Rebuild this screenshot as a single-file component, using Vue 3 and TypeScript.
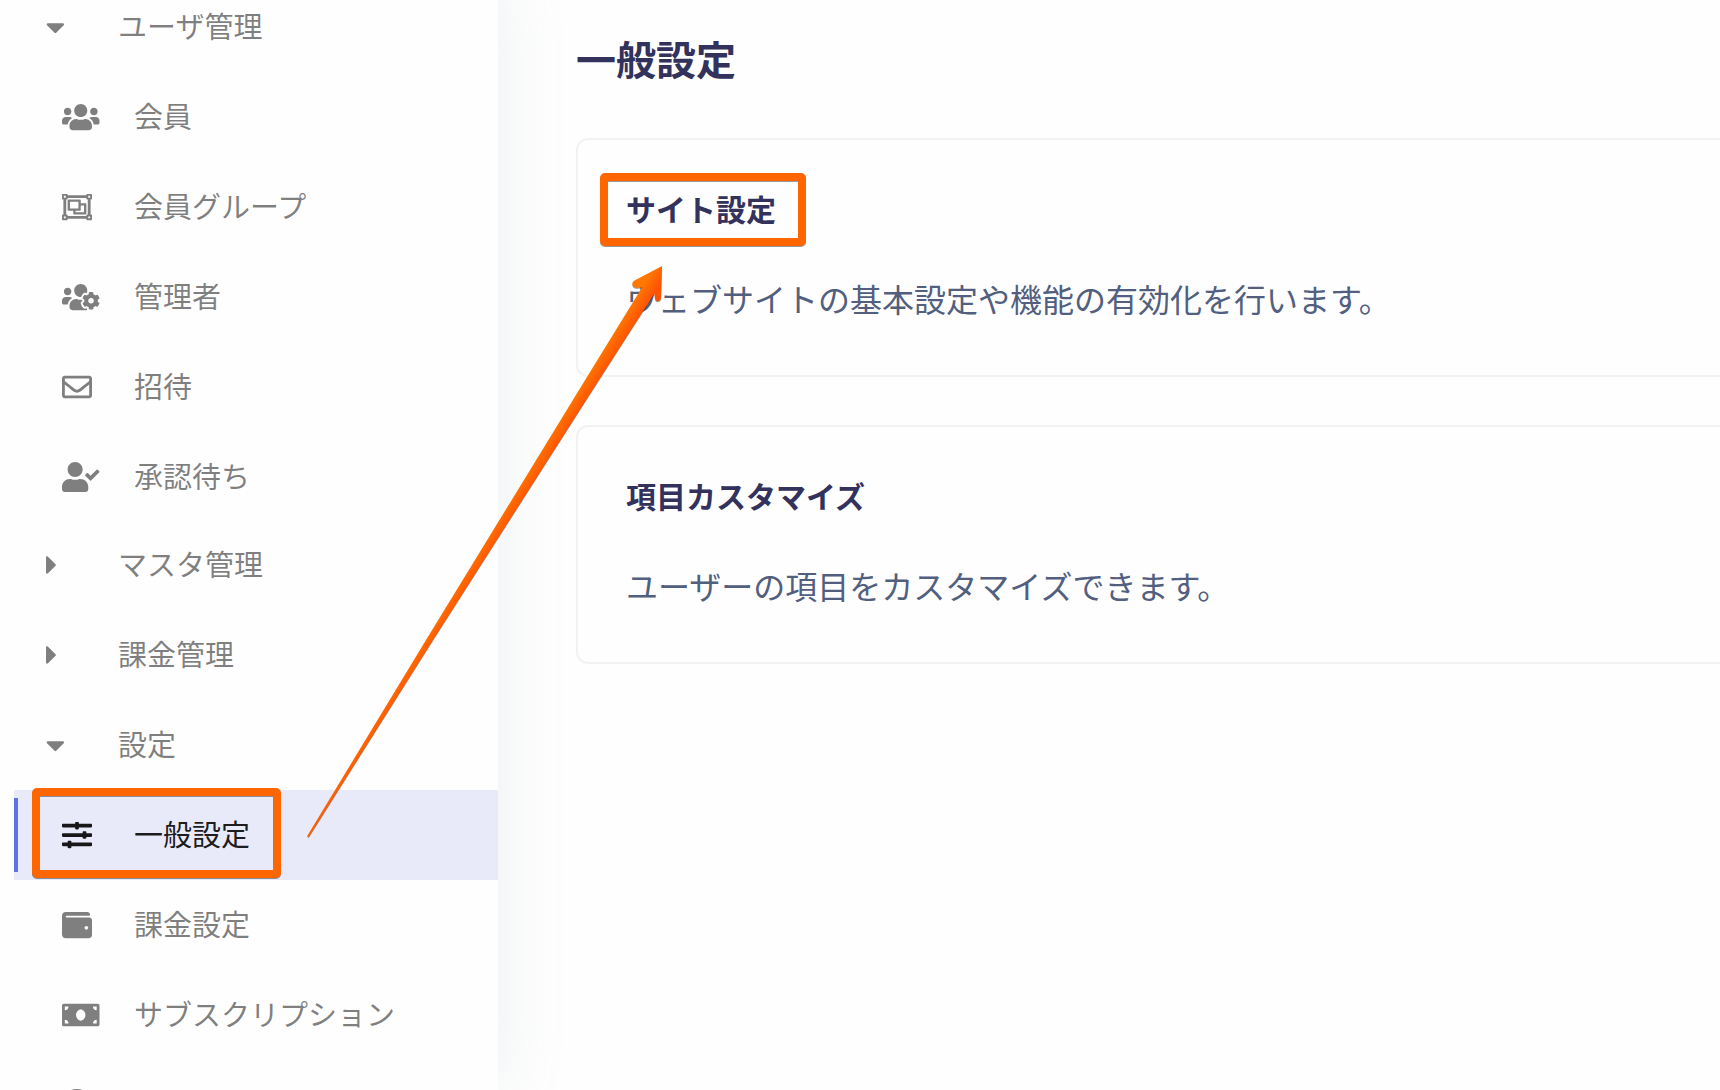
<script setup lang="ts">
interface Icon {
  width: number
  path: string
}

interface MenuItem {
  label: string
  icon: Icon
  active?: boolean
}

interface MenuGroup {
  label: string
  open: boolean
  items: MenuItem[]
}

interface SettingCard {
  title: string
  description: string
}

const caretDown: Icon = {
  width: 320,
  path: 'M31.3 192h257.3c17.8 0 26.7 21.5 14.1 34.1L174.1 354.8c-7.8 7.8-20.5 7.8-28.3 0L17.2 226.1C4.6 213.5 13.5 192 31.3 192z',
}

const caretRight: Icon = {
  width: 192,
  path: 'M0 384.662V127.338c0-17.818 21.543-26.741 34.142-14.142l128.662 128.662c7.81 7.81 7.81 20.474 0 28.284L34.142 398.804C21.543 411.404 0 402.48 0 384.662z',
}

const users: Icon = {
  width: 640,
  path: 'M96 224c35.3 0 64-28.7 64-64s-28.7-64-64-64-64 28.7-64 64 28.7 64 64 64zm448 0c35.3 0 64-28.7 64-64s-28.7-64-64-64-64 28.7-64 64 28.7 64 64 64zm32 32h-64c-17.6 0-33.5 7.1-45.1 18.6 40.3 22.1 68.9 62 75.1 109.4h66c17.7 0 32-14.3 32-32v-32c0-35.3-28.7-64-64-64zm-256 0c61.9 0 112-50.1 112-112S381.9 32 320 32 208 82.1 208 144s50.1 112 112 112zm76.8 32h-8.3c-20.8 10-43.9 16-68.5 16s-47.6-6-68.5-16h-8.3C179.6 288 128 339.6 128 403.2V432c0 26.5 21.5 48 48 48h288c26.5 0 48-21.5 48-48v-28.8c0-63.6-51.6-115.2-115.2-115.2zm-223.7-13.4C161.5 263.1 145.6 256 128 256H64c-35.3 0-64 28.7-64 64v32c0 17.7 14.3 32 32 32h65.9c6.3-47.4 34.9-87.3 75.2-109.4z',
}

const objectGroup: Icon = {
  width: 512,
  path: 'M500 128c6.627 0 12-5.373 12-12V44c0-6.627-5.373-12-12-12h-72c-6.627 0-12 5.373-12 12v12H96V44c0-6.627-5.373-12-12-12H12C5.373 32 0 37.373 0 44v72c0 6.627 5.373 12 12 12h12v256H12c-6.627 0-12 5.373-12 12v72c0 6.627 5.373 12 12 12h72c6.627 0 12-5.373 12-12v-12h320v12c0 6.627 5.373 12 12 12h72c6.627 0 12-5.373 12-12v-72c0-6.627-5.373-12-12-12h-12V128h12zm-52-64h32v32h-32V64zM32 64h32v32H32V64zm32 384H32v-32h32v32zm416 0h-32v-32h32v32zm-40-64h-12c-6.627 0-12 5.373-12 12v12H96v-12c0-6.627-5.373-12-12-12H72V128h12c6.627 0 12-5.373 12-12v-12h320v12c0 6.627 5.373 12 12 12h12v256zm-36-192h-84v-52c0-6.628-5.373-12-12-12H108c-6.627 0-12 5.373-12 12v168c0 6.628 5.373 12 12 12h84v52c0 6.628 5.373 12 12 12h200c6.627 0 12-5.373 12-12V204c0-6.628-5.373-12-12-12zm-268-24h144v112H136V168zm240 176H232v-24h76c6.627 0 12-5.373 12-12v-76h56v112z',
}

const usersCog: Icon = {
  width: 640,
  path: 'M610.5 341.3c2.6-14.1 2.6-28.5 0-42.6l25.8-14.9c3-1.7 4.3-5.2 3.3-8.5-6.7-21.6-18.2-41.2-33.2-57.4-2.3-2.5-6-3.1-9-1.4l-25.8 14.9c-10.9-9.3-23.4-16.5-36.9-21.3v-29.8c0-3.4-2.4-6.4-5.7-7.1-22.3-5-45-4.8-66.2 0-3.3.7-5.7 3.7-5.7 7.1v29.8c-13.5 4.8-26 12-36.9 21.3l-25.8-14.9c-2.9-1.7-6.7-1.1-9 1.4-15 16.2-26.5 35.8-33.2 57.4-1 3.3.4 6.8 3.3 8.5l25.8 14.9c-2.6 14.1-2.6 28.5 0 42.6l-25.8 14.9c-3 1.7-4.3 5.2-3.3 8.5 6.7 21.6 18.2 41.1 33.2 57.4 2.3 2.5 6 3.1 9 1.4l25.8-14.9c10.9 9.3 23.4 16.5 36.9 21.3v29.8c0 3.4 2.4 6.4 5.7 7.1 22.3 5 45 4.8 66.2 0 3.3-.7 5.7-3.7 5.7-7.1v-29.8c13.5-4.8 26-12 36.9-21.3l25.8 14.9c2.9 1.7 6.7 1.1 9-1.4 15-16.2 26.5-35.8 33.2-57.4 1-3.3-.4-6.8-3.3-8.5l-25.8-14.9zM496 368.5c-26.8 0-48.5-21.8-48.5-48.5s21.8-48.5 48.5-48.5 48.5 21.8 48.5 48.5-21.7 48.5-48.5 48.5zM96 224c35.3 0 64-28.7 64-64s-28.7-64-64-64-64 28.7-64 64 28.7 64 64 64zm224 32c1.9 0 3.7-.5 5.6-.6 8.3-21.7 20.5-42.1 36.3-59.2 7.4-8 17.9-12.6 28.9-12.6 6.9 0 13.7 1.8 19.6 5.3l7.9 4.6c.8-.5 1.6-.9 2.4-1.4 7-14.6 11.2-30.8 11.2-48 0-61.9-50.1-112-112-112S208 82.1 208 144c0 61.9 50.1 112 112 112zm105.2 194.5c-2.3-1.2-4.6-2.6-6.8-3.9-8.2 4.8-15.3 9.8-27.5 9.8-10.9 0-21.4-4.6-28.9-12.6-18.3-19.8-32.3-43.9-40.2-69.6-10.7-34.5 24.9-49.7 25.8-50.3-.1-2.6-.1-5.2 0-7.8l-7.9-4.6c-3.8-2.2-7-5-9.8-8.1-3.3.2-6.5.6-9.8.6-24.6 0-47.6-6-68.5-16h-8.3C179.6 288 128 339.6 128 403.2V432c0 26.5 21.5 48 48 48h255.4c-3.7-6-6.2-12.8-6.2-20.3v-9.2zM173.1 274.6C161.5 263.1 145.6 256 128 256H64c-35.3 0-64 28.7-64 64v32c0 17.7 14.3 32 32 32h65.9c6.3-47.4 34.9-87.3 75.2-109.4z',
}

const envelope: Icon = {
  width: 512,
  path: 'M464 64H48C21.49 64 0 85.49 0 112v288c0 26.51 21.49 48 48 48h416c26.51 0 48-21.49 48-48V112c0-26.51-21.49-48-48-48zm0 48v40.805c-22.422 18.259-58.168 46.651-134.587 106.49-16.841 13.247-50.201 45.072-73.413 44.701-23.208.375-56.579-31.459-73.413-44.701C106.18 199.465 70.425 171.067 48 152.805V112h416zM48 400V214.398c22.914 18.251 55.409 43.862 104.938 82.646 21.857 17.205 60.134 55.186 103.062 54.955 42.717.231 80.509-37.199 103.053-54.947 49.528-38.783 82.032-64.401 104.947-82.653V400H48z',
}

const userCheck: Icon = {
  width: 640,
  path: 'M224 256c70.7 0 128-57.3 128-128S294.7 0 224 0 96 57.3 96 128s57.3 128 128 128zm89.6 32h-16.7c-22.2 10.2-46.9 16-72.9 16s-50.6-5.8-72.9-16h-16.7C60.2 288 0 348.2 0 422.4V464c0 26.5 21.5 48 48 48h352c26.5 0 48-21.5 48-48v-41.6c0-74.2-60.2-134.4-134.4-134.4zm323-128.4l-27.8-28.1c-4.6-4.7-12.1-4.7-16.8-.1l-104.8 104-45.5-45.8c-4.6-4.7-12.1-4.7-16.8-.1l-28.1 27.9c-4.7 4.6-4.7 12.1-.1 16.8l81.7 82.3c4.6 4.7 12.1 4.7 16.8.1l141.3-140.2c4.6-4.7 4.7-12.2.1-16.8z',
}

const sliders: Icon = {
  width: 512,
  path: 'M496 384H160v-16c0-8.8-7.2-16-16-16h-32c-8.8 0-16 7.2-16 16v16H16c-8.8 0-16 7.2-16 16v32c0 8.8 7.2 16 16 16h80v16c0 8.8 7.2 16 16 16h32c8.8 0 16-7.2 16-16v-16h336c8.8 0 16-7.2 16-16v-32c0-8.8-7.2-16-16-16zm0-160h-80v-16c0-8.8-7.2-16-16-16h-32c-8.8 0-16 7.2-16 16v16H16c-8.8 0-16 7.2-16 16v32c0 8.8 7.2 16 16 16h336v16c0 8.8 7.2 16 16 16h32c8.8 0 16-7.2 16-16v-16h80c8.8 0 16-7.2 16-16v-32c0-8.8-7.2-16-16-16zm0-160H288V48c0-8.8-7.2-16-16-16h-32c-8.8 0-16 7.2-16 16v16H16C7.2 64 0 71.2 0 80v32c0 8.8 7.2 16 16 16h208v16c0 8.8 7.2 16 16 16h32c8.8 0 16-7.2 16-16v-16h208c8.8 0 16-7.2 16-16V80c0-8.8-7.2-16-16-16z',
}

const wallet: Icon = {
  width: 512,
  path: 'M461.2 128H80c-8.84 0-16-7.16-16-16s7.16-16 16-16h384c8.84 0 16-7.16 16-16 0-26.51-21.49-48-48-48H64C28.65 32 0 60.65 0 96v320c0 35.35 28.65 64 64 64h397.2c28.02 0 50.8-21.53 50.8-48V176c0-26.47-22.78-48-50.8-48zM416 336c-17.67 0-32-14.33-32-32s14.33-32 32-32 32 14.33 32 32-14.33 32-32 32z',
}

const moneyBill: Icon = {
  width: 640,
  path: 'M608 64H32C14.33 64 0 78.33 0 96v320c0 17.67 14.33 32 32 32h576c17.67 0 32-14.33 32-32V96c0-17.67-14.33-32-32-32zM48 400v-64c35.35 0 64 28.65 64 64H48zm0-224v-64h64c0 35.35-28.65 64-64 64zm272 176c-44.19 0-80-42.99-80-96 0-53.02 35.82-96 80-96s80 42.98 80 96c0 53.03-35.83 96-80 96zm272 48h-64c0-35.35 28.65-64 64-64v64zm0-224c-35.35 0-64-28.65-64-64h64v64z',
}

const disc: Icon = {
  width: 512,
  path: 'M256-18a256 256 0 1 0 0 512a256 256 0 1 0 0-512z',
}

const groups: MenuGroup[] = [
  {
    label: 'ユーザ管理',
    open: true,
    items: [
      { label: '会員', icon: users },
      { label: '会員グループ', icon: objectGroup },
      { label: '管理者', icon: usersCog },
      { label: '招待', icon: envelope },
      { label: '承認待ち', icon: userCheck },
    ],
  },
  { label: 'マスタ管理', open: false, items: [] },
  { label: '課金管理', open: false, items: [] },
  {
    label: '設定',
    open: true,
    items: [
      { label: '一般設定', icon: sliders, active: true },
      { label: '課金設定', icon: wallet },
      { label: 'サブスクリプション', icon: moneyBill },
      { label: '', icon: disc },
    ],
  },
]

const cards: SettingCard[] = [
  { title: 'サイト設定', description: 'ウェブサイトの基本設定や機能の有効化を行います。' },
  { title: '項目カスタマイズ', description: 'ユーザーの項目をカスタマイズできます。' },
]
</script>

<template>
  <div class="page">
    <nav class="sidebar">
      <section v-for="group in groups" :key="group.label">
        <button class="group" type="button" :aria-expanded="group.open">
          <span class="caret">
            <svg
              class="icon"
              :viewBox="`0 0 ${(group.open ? caretDown : caretRight).width} 512`"
              aria-hidden="true"
            >
              <path :d="(group.open ? caretDown : caretRight).path" />
            </svg>
          </span>
          <span class="label">{{ group.label }}</span>
        </button>
        <ul v-if="group.items.length" class="items">
          <li v-for="item in group.items" :key="item.label">
            <a class="item" :class="{ active: item.active }" href="#">
              <span class="symbol">
                <svg class="icon" :viewBox="`0 0 ${item.icon.width} 512`" aria-hidden="true">
                  <path :d="item.icon.path" />
                </svg>
              </span>
              <span class="label">{{ item.label }}</span>
            </a>
          </li>
        </ul>
      </section>
    </nav>

    <main class="content">
      <h1 class="heading">一般設定</h1>
      <article v-for="card in cards" :key="card.title" class="card">
        <h2 class="card-title">{{ card.title }}</h2>
        <p class="card-text">{{ card.description }}</p>
      </article>
    </main>

    <!-- Callout boxes and the arrow from the menu item to the card title -->
    <svg class="callouts" viewBox="0 0 820 900" aria-hidden="true">
      <defs>
        <linearGradient
          id="shaft"
          gradientUnits="userSpaceOnUse"
          x1="579.8"
          y1="386.3"
          x2="591.6"
          y2="393.7"
        >
          <stop offset="0" stop-color="#ff7600" />
          <stop offset="0.5" stop-color="#ff6400" />
          <stop offset="1" stop-color="#ff5200" />
        </linearGradient>
      </defs>
      <rect class="box" x="36" y="792" width="241" height="82" rx="1" />
      <rect class="box" x="604" y="177" width="198" height="65" rx="1" />
      <path
        class="arrow"
        d="M307.2 836 L426 640 L579 390 L642 287.5 L636.5 287.8 C632 288 631 282.5 634.5 280.6 L662 266 L661 298 C660.6 302 655.4 302.2 655 298.6 L654.4 293.5 L592.5 390 L433 640 L308.8 837 Z"
      />
    </svg>
  </div>
</template>

<style>
body {
  margin: 0;
  background: #fefefe;
}
</style>

<style scoped>
.page {
  position: relative;
  display: flex;
  height: 100vh;
  overflow: hidden;
  font-family: "Noto Sans CJK JP", sans-serif;
}

.sidebar {
  flex: none;
  box-sizing: border-box;
  width: 498px;
  margin-top: -18px;
  padding-left: 14px;
  background: #fefefe;
  box-shadow: 0 0 64px rgba(136, 152, 170, 0.15);
}

.group,
.item {
  display: flex;
  align-items: center;
  box-sizing: border-box;
  width: 100%;
  height: 90px;
  font-family: inherit;
  font-size: 29px;
  line-height: 44px;
  color: rgba(0, 0, 0, 0.5);
  white-space: nowrap;
}

.group {
  padding: 0 0 0 32px;
  border: 0;
  background: none;
  text-align: left;
}

.caret {
  display: flex;
  flex: none;
  width: 72px;
}

.items {
  margin: 0 0 -2px;
  padding: 0;
  list-style: none;
}

.item {
  position: relative;
  padding-left: 48px;
  text-decoration: none;
}

.symbol {
  display: flex;
  flex: none;
  width: 72px;
}

.label {
  padding-bottom: 4px;
}

.icon {
  display: block;
  height: 30px;
  overflow: visible;
  fill: currentColor;
}

.active {
  background: #e8eaf9;
  color: rgba(0, 0, 0, 0.9);
}

.active::before {
  content: "";
  position: absolute;
  top: 8px;
  bottom: 8px;
  left: 0;
  width: 4px;
  background: #5e72e4;
}

.content {
  flex: 1;
  min-width: 0;
  padding: 28px 0 0 78px;
}

.heading {
  margin: 0 0 50px;
  font-size: 40px;
  line-height: 60px;
  font-weight: 700;
  color: #32325d;
}

.card {
  margin-bottom: 48px;
  padding: 46px 0 52px 48px;
  border: 2px solid #f2f2f2;
  border-right: 0;
  border-radius: 12px 0 0 12px;
}

.card-title {
  margin: 0 0 42px;
  font-size: 30px;
  line-height: 45px;
  font-weight: 700;
  color: #32325d;
}

.card-text {
  margin: 0;
  font-size: 32px;
  line-height: 50px;
  color: #525f7f;
}

.callouts {
  position: absolute;
  top: 0;
  left: 0;
  width: 820px;
  height: 900px;
  pointer-events: none;
  filter: drop-shadow(0 1px 0 rgba(0, 0, 0, 0.4));
}

.box {
  fill: none;
  stroke: #ff6600;
  stroke-width: 8px;
}

.arrow {
  fill: url(#shaft);
}
</style>
